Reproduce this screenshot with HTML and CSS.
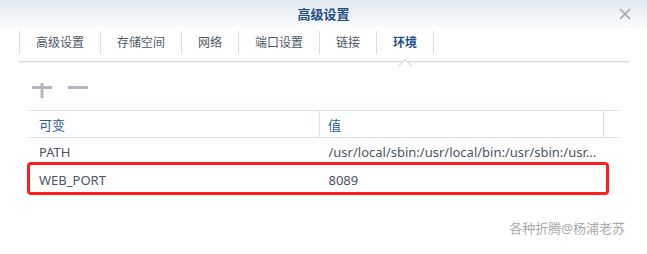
FILE: index.html
```html
<!DOCTYPE html>
<html lang="zh-CN">
<head>
  <meta charset="UTF-8" />
  <title>高级设置</title>
  <link rel="stylesheet" href="styles.css">
</head>
<body>
  <div class="window">
    <header class="titlebar">
      <span></span>
      <h1 class="title">高级设置</h1>
      <button class="close" aria-label="关闭">
        <svg width="12" height="12" viewBox="0 0 12 12"><path d="M1 1 L11 11 M11 1 L1 11" stroke="#a3a7ad" stroke-width="1.6" fill="none"/></svg>
      </button>
    </header>

    <nav class="tabs">
      <a class="tab">高级设置</a>
      <a class="tab">存储空间</a>
      <a class="tab">网络</a>
      <a class="tab">端口设置</a>
      <a class="tab">链接</a>
      <a class="tab active">环境</a>
    </nav>

    <div class="toolbar">
      <button class="tool" aria-label="新增">
        <svg width="20" height="16" viewBox="0 0 20 16"><path d="M0 4.5 H20 M10 0 V15" stroke="#b3b7bd" stroke-width="3" fill="none"/></svg>
      </button>
      <button class="tool" aria-label="删除">
        <svg width="20" height="16" viewBox="0 0 20 16"><path d="M0 4.5 H20" stroke="#b3b7bd" stroke-width="3" fill="none"/></svg>
      </button>
    </div>

    <div class="grid-wrap">
      <table class="grid">
        <thead>
          <tr><th class="col-name">可变</th><th class="col-value">值</th><th class="col-pad"></th></tr>
        </thead>
        <tbody>
          <tr><td>PATH</td><td title="/usr/local/sbin:/usr/local/bin:/usr/sbin:/usr/bin:/sbin:/bin">/usr/local/sbin:/usr/local/bin:/usr/sbin:/usr...</td><td></td></tr>
          <tr><td>WEB_PORT</td><td>8089</td><td></td></tr>
        </tbody>
      </table>
      <div class="highlight"></div>
    </div>

    <div class="watermark">各种折腾@杨浦老苏</div>
  </div>
</body>
</html>
```

FILE: styles.css
```css
body {
  margin: 0;
  background: #fff;
  font-family: "Noto Sans", "Noto Sans CJK SC", sans-serif;
  color: #4b5561;
}
.window {
  width: 647px;
  height: 254px;
  overflow: hidden;
}
.titlebar {
  height: 28px;
  display: grid;
  grid-template-columns: 1fr auto 1fr;
  align-items: center;
  background: linear-gradient(to bottom, #e2e8ef, #fbfcfd);
}
.title {
  margin: 0;
  font-size: 13px;
  font-weight: bold;
  color: #1f4f86;
  line-height: 28px;
}
.close {
  justify-self: end;
  margin-right: 16px;
  border: 0;
  padding: 0;
  background: none;
  display: flex;
}
.tabs {
  margin: 0 18px 0 19px;
  padding-top: 3px;
  height: 30px;
  display: flex;
  align-items: flex-start;
  border-bottom: 1px solid #d4d8dd;
  box-shadow: 0 1px 1px rgba(0, 0, 0, 0.05);
}
.tab {
  position: relative;
  height: 23px;
  line-height: 23px;
  padding: 0 16px;
  font-size: 12px;
  color: #4b5866;
  border-left: 1px solid #d6e0ea;
}
.tab:last-child {
  border-right: 1px solid #d6e0ea;
}
.tab.active {
  font-weight: bold;
  color: #1f4f86;
}
.tab.active::after {
  content: "";
  position: absolute;
  left: 50%;
  top: 30px;
  width: 9px;
  height: 9px;
  margin-left: -5px;
  background: #fff;
  border-left: 1px solid #d4d8dd;
  border-top: 1px solid #d4d8dd;
  transform: rotate(45deg);
}
.toolbar {
  display: flex;
  gap: 16px;
  padding: 21px 0 0 32px;
  height: 27px;
}
.tool {
  border: 0;
  padding: 0;
  background: none;
  display: flex;
  height: 16px;
}
.grid-wrap {
  position: relative;
  margin: 0 28px 0 29px;
}
.grid {
  width: 100%;
  table-layout: fixed;
  border-collapse: collapse;
  font-size: 13px;
}
.grid th {
  height: 26px;
  text-align: left;
  font-weight: normal;
  color: #2a5d9c;
  border-top: 1px solid #d9e3ee;
  border-bottom: 1px solid #d9e3ee;
  padding: 0 0 0 10px;
}
.grid th + th {
  border-left: 1px solid #d9e3ee;
  padding-left: 8px;
}
.col-name { width: 280px; }
.col-pad { width: 7px; }
.grid td {
  height: 28px;
  padding: 0 0 0 10px;
  white-space: nowrap;
  overflow: hidden;
}
.grid td + td {
  padding-left: 9px;
}
.highlight {
  position: absolute;
  left: -2px;
  top: 52px;
  width: 576px;
  height: 27px;
  border: 3px solid #ff1e1e;
  border-radius: 4px;
}
.watermark {
  text-align: right;
  padding: 24px 22px 0 0;
  font-size: 13px;
  color: #a9a9a9;
}
```
